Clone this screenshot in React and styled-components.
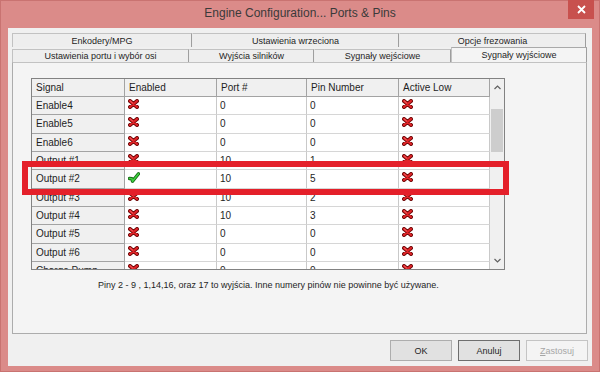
import React from 'react'
import styled, { createGlobalStyle } from 'styled-components'

const GlobalStyle = createGlobalStyle`
  html, body {
    margin: 0;
    padding: 0;
  }
  body {
    width: 600px;
    height: 372px;
    overflow: hidden;
    font-family: "Liberation Sans", Arial, sans-serif;
  }
`;

const Window = styled.div`
  position: relative;
  width: 600px;
  height: 372px;
  box-sizing: border-box;
  background: #DB8B89;
  box-shadow: inset 0 0 0 1px #C97371;
  display: flex;
  flex-direction: column;
`;

const TitleBar = styled.div`
  height: 28px;
  padding: 0 6px;
  display: grid;
  grid-template-columns: 1fr auto 1fr;
  align-items: center;
`;

const Title = styled.div`
  grid-column: 2;
  font-size: 12px;
  color: #3A3A3A;
  margin-top: -2px;
`;

const CloseButton = styled.div`
  grid-column: 3;
  justify-self: end;
  align-self: start;
  width: 26px;
  height: 19px;
  background: #C8514E;
  display: flex;
  align-items: center;
  justify-content: center;
`;

const Client = styled.div`
  flex: 1;
  margin: 0 8px 6px;
  padding: 5px 5px 0 4px;
  background: #F0F0F0;
  display: flex;
  flex-direction: column;
`;

const TabRow = styled.div`
  display: flex;
  height: ${p => p.$h}px;
  align-items: flex-end;
`;

const Tab = styled.div`
  box-sizing: border-box;
  width: ${p => p.$w}px;
  height: ${p => (p.$active ? '100%' : p.$front ? 'calc(100% - 2px)' : '100%')};
  border: 1px solid ${p => (p.$active ? '#A9A9A9' : '#C2C2C2')};
  border-bottom: none;
  border-left-color: ${p => (p.$first || p.$active ? '#C2C2C2' : '#ECECEC')};
  border-right-color: #9E9E9E;
  background: ${p => (p.$active ? '#F4F4F4' : '#EEEEEE')};
  font-size: 9px;
  color: #1E1E1E;
  display: flex;
  justify-content: center;
  align-items: ${p => (p.$active ? 'flex-start' : 'center')};
  padding-top: ${p => (p.$active ? 2 : 0)}px;
  white-space: nowrap;
`;

const Panel = styled.div`
  box-sizing: border-box;
  height: 272px;
  width: 575px;
  border: 1px solid #ACACAC;
  border-top-color: #C2C2C2;
  background: #F4F4F4;
  padding: 15px 0 0 18px;
  display: flex;
  flex-direction: column;
`;

const GridFrame = styled.div`
  box-sizing: border-box;
  width: 474px;
  height: 192px;
  border: 1px solid #828282;
  display: flex;
  background: #F0F0F0;
`;

const Table = styled.div`
  display: grid;
  grid-template-columns: 93px 92px 90px 92px 91px;
  grid-template-rows: 18px;
  grid-auto-rows: 18.33px;
  align-content: start;
  overflow: hidden;
`;

const Cell = styled.div`
  box-sizing: border-box;
  display: flex;
  align-items: center;
  padding-left: ${p => (p.$kind === 'data' ? 3 : 4)}px;
  border-right: 1px solid ${p => (p.$kind === 'data' ? '#C9C9C9' : '#A3A3A3')};
  border-bottom: 1px solid ${p => (p.$kind === 'data' ? '#D6D6D6' : '#A3A3A3')};
  background: ${p => (p.$kind === 'data' ? '#FFFFFF' : '#F0F0F0')};
  font-size: 10px;
  color: #1E1E1E;
  white-space: nowrap;
  overflow: hidden;
`;

const IconCell = styled(Cell)`
  align-items: flex-start;
  padding-top: 2px;
`;

const ScrollBar = styled.div`
  width: 14px;
  display: flex;
  flex-direction: column;
  background: #F0F0F0;
`;

const ArrowBox = styled.div`
  height: 17px;
  display: flex;
  align-items: center;
  justify-content: center;
`;

const Track = styled.div`
  flex: 1;
  padding-top: 13px;
  display: flex;
  flex-direction: column;
`;

const Thumb = styled.div`
  height: 43px;
  margin: 0 1px;
  background: #CDCDCD;
`;

const Note = styled.div`
  margin: 9px 0 0 67px;
  font-size: 9px;
  line-height: 12px;
  color: #1E1E1E;
`;

const ButtonRow = styled.div`
  display: flex;
  justify-content: flex-end;
  gap: 6px;
  margin: 6px -1px 0 0;
`;

const Button = styled.div`
  box-sizing: border-box;
  width: 62px;
  height: 21px;
  border: 1px solid ${p => (p.$disabled ? '#C4C4C4' : p.$default ? '#6E6E6E' : '#ADADAD')};
  background: ${p => (p.$disabled ? '#F4F4F4' : '#E1E1E1')};
  color: ${p => (p.$disabled ? '#A6A6A6' : '#1E1E1E')};
  font-size: 9px;
  display: flex;
  align-items: center;
  justify-content: center;

  u {
    text-decoration: underline;
  }
`;

const Highlight = styled.div`
  position: absolute;
  left: 22px;
  top: 161px;
  width: 487px;
  height: 34px;
  box-sizing: border-box;
  border: 6px solid #E4202A;
  pointer-events: none;
`;

function RedX() {
    return (
        <svg width="11" height="10" viewBox="0 0 11 10">
            <path d="M2 2 L9 8 M9 2 L2 8" stroke="#6E0A0A" strokeWidth="4" strokeLinecap="round" fill="none" />
            <path d="M2 2 L9 8 M9 2 L2 8" stroke="#E02428" strokeWidth="2.2" strokeLinecap="round" fill="none" />
            <path d="M2.3 2 L4.5 3.9" stroke="#F77" strokeWidth="0.8" strokeLinecap="round" fill="none" />
        </svg>
    )
}

function GreenCheck() {
    return (
        <svg width="12" height="11" viewBox="0 0 12 11">
            <path d="M1.5 6.5 L4 6.8 L4.5 9.2 L10.5 1.8" stroke="#176A17" strokeWidth="3.4" strokeLinecap="round" strokeLinejoin="round" fill="none" />
            <path d="M1.5 6.5 L4 6.8 L4.5 9.2 L10.5 1.8" stroke="#3FD13F" strokeWidth="1.6" strokeLinecap="round" strokeLinejoin="round" fill="none" />
        </svg>
    )
}

function Chevron({ up }) {
    return (
        <svg width="7" height="5" viewBox="0 0 7 5">
            <path d={up ? 'M0.5 4 L3.5 1 L6.5 4' : 'M0.5 1 L3.5 4 L6.5 1'} stroke="#606060" strokeWidth="1.2" fill="none" />
        </svg>
    )
}

const rows = [
    ['Enable4', false, '0', '0'],
    ['Enable5', false, '0', '0'],
    ['Enable6', false, '0', '0'],
    ['Output #1', false, '10', '1'],
    ['Output #2', true, '10', '5'],
    ['Output #3', false, '10', '2'],
    ['Output #4', false, '10', '3'],
    ['Output #5', false, '0', '0'],
    ['Output #6', false, '0', '0'],
    ['Charge Pump', false, '0', '0'],
];

const headers = ['Signal', 'Enabled', 'Port #', 'Pin Number', 'Active Low'];

function App() {
    return (
        <>
            <GlobalStyle />
            <Window>
                <TitleBar>
                    <Title>Engine Configuration... Ports &amp; Pins</Title>
                    <CloseButton>
                        <svg width="9" height="9" viewBox="0 0 9 9">
                            <path d="M1 1 L8 8 M8 1 L1 8" stroke="#FFFFFF" strokeWidth="1.8" />
                        </svg>
                    </CloseButton>
                </TitleBar>
                <Client>
                    <TabRow $h={14}>
                        <Tab $w={180} $first>Enkodery/MPG</Tab>
                        <Tab $w={207}>Ustawienia wrzeciona</Tab>
                        <Tab $w={187}>Opcje frezowania</Tab>
                    </TabRow>
                    <TabRow $h={15}>
                        <Tab $w={177} $front $first>Ustawienia portu i wybór osi</Tab>
                        <Tab $w={125} $front>Wyjścia silników</Tab>
                        <Tab $w={137} $front>Sygnały wejściowe</Tab>
                        <Tab $w={136} $active>Sygnały wyjściowe</Tab>
                    </TabRow>
                    <Panel>
                        <GridFrame>
                            <Table>
                                {headers.map(h => (
                                    <Cell key={h} $kind="head">{h}</Cell>
                                ))}
                                {rows.map(([name, enabled, port, pin]) => (
                                    <React.Fragment key={name}>
                                        <Cell $kind="side">{name}</Cell>
                                        <IconCell $kind="data">{enabled ? <GreenCheck /> : <RedX />}</IconCell>
                                        <Cell $kind="data">{port}</Cell>
                                        <Cell $kind="data">{pin}</Cell>
                                        <IconCell $kind="data"><RedX /></IconCell>
                                    </React.Fragment>
                                ))}
                            </Table>
                            <ScrollBar>
                                <ArrowBox><Chevron up /></ArrowBox>
                                <Track><Thumb /></Track>
                                <ArrowBox><Chevron /></ArrowBox>
                            </ScrollBar>
                        </GridFrame>
                        <Note>Piny 2 - 9 , 1,14,16, oraz 17 to wyjścia. Inne numery pinów nie powinne być używane.</Note>
                    </Panel>
                    <ButtonRow>
                        <Button>OK</Button>
                        <Button $default>Anuluj</Button>
                        <Button $disabled><span><u>Z</u>astosuj</span></Button>
                    </ButtonRow>
                </Client>
                <Highlight />
            </Window>
        </>
    )
}

export default App
